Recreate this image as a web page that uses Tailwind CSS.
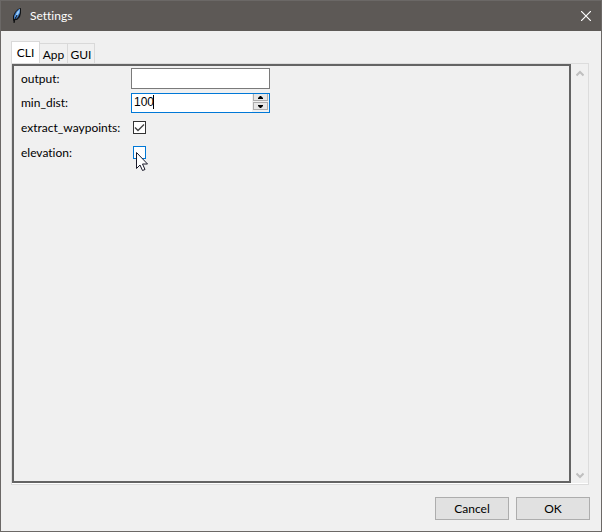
<!DOCTYPE html>
<html lang="en">
<head>
    <meta charset="UTF-8">
    <meta name="viewport" content="width=device-width, initial-scale=1.0">
    <title>Settings</title>
    <script src="https://cdn.jsdelivr.net/npm/@tailwindcss/browser@4"></script>
</head>
<body class="bg-[#f0f0f0] text-black font-[Lato,'Open_Sans',sans-serif] text-[12px] leading-4 [font-variant-ligatures:none]">
    <div class="flex flex-col h-screen border border-[#6b6866]">
        <!-- Title bar -->
        <header class="flex items-center h-[30px] pl-2 pr-[7px] bg-[#5d5956] text-white">
            <svg class="w-4 h-4 mr-[5px]" viewBox="0 0 16 16">
                <path d="M5 15 L4 12 L4 8 L6 4 L9 1 L12 0 L12 5 L11 9 L8 12 L6 12 Z" fill="#101316"/>
                <path d="M5 11 L5 8 L7 4 L10 1 L11 1 L11 5 L9 9 L7 11 Z" fill="#3d7cc9"/>
                <path d="M6 9 L8 4 L11 1 L10 5 L8 8 Z" fill="#9accf8"/>
                <path d="M5 15 L6 11 L8 7" stroke="#111" fill="none"/>
            </svg>
            <h1 class="grow">Settings</h1>
            <button aria-label="Close" class="p-[3px]">
                <svg class="w-[10px] h-[10px]" viewBox="0 0 10 10" fill="none" stroke="#fff" stroke-width="1.2">
                    <path d="M0 0 L10 10 M10 0 L0 10"/>
                </svg>
            </button>
        </header>

        <main class="flex flex-col grow min-h-0 pl-[10px] pr-[11px] pt-[10px] pb-[11px]">
            <!-- Tabs -->
            <div class="flex items-end" role="tablist">
                <button role="tab" aria-selected="true" class="h-[22px] w-[29px] bg-white border border-b-0 border-[#d9d9d9]">CLI</button>
                <button role="tab" class="h-5 w-7 pt-[2px] border-t border-r border-[#d9d9d9]">App</button>
                <button role="tab" class="h-5 w-[27px] pt-[2px] border-t border-r border-[#d9d9d9]">GUI</button>
            </div>

            <!-- Tab page -->
            <div class="flex grow min-h-0 mr-px border border-[#dcdcdc] bg-white pb-px" role="tabpanel">
                <form class="grow border-2 border-[#646464] bg-[#f0f0f0] pl-[7px]">
                    <div class="flex items-center h-[25px]">
                        <label for="output" class="w-[110px]">output:</label>
                        <input id="output" type="text" class="w-[139px] h-[21px] px-[3px] bg-white border border-[#7a7a7a]">
                    </div>
                    <div class="flex items-center h-6">
                        <label for="min_dist" class="w-[110px]">min_dist:</label>
                        <div class="relative flex w-[139px] h-5 bg-white border border-[#0078d7]">
                            <input id="min_dist" type="text" value="100" class="grow min-w-0 pl-[2px] pb-[2px] font-['Liberation_Sans',Arial,sans-serif] outline-none">
                            <span class="absolute left-[21px] top-px w-px h-[14px] bg-black"></span>
                            <div class="flex flex-col shrink-0 w-[17px] px-px pb-[2px] gap-px bg-[#f0f0f0]">
                                <button type="button" aria-label="Increase" class="flex items-center justify-center grow bg-[#e7e7e7] border border-t-0 border-[#adadad]">
                                    <svg class="w-[5px] h-[3px]" viewBox="0 0 5 3"><path d="M0 3 V2 L2 0 H3 L5 2 V3 Z"/></svg>
                                </button>
                                <button type="button" aria-label="Decrease" class="flex items-center justify-center grow bg-[#e7e7e7] border border-[#adadad]">
                                    <svg class="w-[5px] h-[3px]" viewBox="0 0 5 3"><path d="M0 0 H5 V1 L3 3 H2 L0 1 Z"/></svg>
                                </button>
                            </div>
                        </div>
                    </div>
                    <div class="flex items-center h-[25px]">
                        <label for="extract_waypoints" class="w-[112px]">extract_waypoints:</label>
                        <div class="relative flex">
                            <input id="extract_waypoints" type="checkbox" checked class="appearance-none w-[13px] h-[13px] bg-white border border-[#333]">
                            <svg class="absolute inset-0 w-[13px] h-[13px] pointer-events-none" viewBox="0 0 13 13" fill="none" stroke="#444" stroke-width="1.4">
                                <path d="M2 6.5 L5 9.5 L11 3.5"/>
                            </svg>
                        </div>
                    </div>
                    <div class="flex items-center h-[25px]">
                        <label for="elevation" class="w-[112px]">elevation:</label>
                        <div class="relative flex">
                            <input id="elevation" type="checkbox" class="appearance-none w-[13px] h-[13px] bg-white border border-[#0078d7]">
                            <!-- Mouse pointer -->
                            <svg class="absolute left-[3px] top-[6px] w-3 h-[19px] pointer-events-none" viewBox="0 0 12 19">
                                <path d="M0.5 0.5 V16.5 L4 13 L6.5 18.5 L9 17.5 L6.5 12 H11.5 Z" fill="#fff" stroke="#1a1a2a"/>
                            </svg>
                        </div>
                    </div>
                </form>

                <!-- Scroll bar -->
                <div class="flex flex-col justify-between items-center w-[17px] pt-[6px] pb-1 bg-[#f0f0f0] text-[#bfbfbf]">
                    <svg class="w-2 h-[7px]" viewBox="0 0 8 7" fill="none" stroke="currentColor" stroke-width="2"><path d="M0.5 5.5 L4 2 L7.5 5.5"/></svg>
                    <svg class="w-2 h-[7px]" viewBox="0 0 8 7" fill="none" stroke="currentColor" stroke-width="2"><path d="M0.5 1.5 L4 5 L7.5 1.5"/></svg>
                </div>
            </div>

            <!-- Dialog buttons -->
            <div class="flex justify-end gap-[7px] mt-3">
                <button class="w-[74px] h-[23px] bg-[#e1e1e1] border border-[#adadad]">Cancel</button>
                <button class="w-[74px] h-[23px] bg-[#e1e1e1] border border-[#adadad]">OK</button>
            </div>
        </main>
    </div>
</body>
</html>
